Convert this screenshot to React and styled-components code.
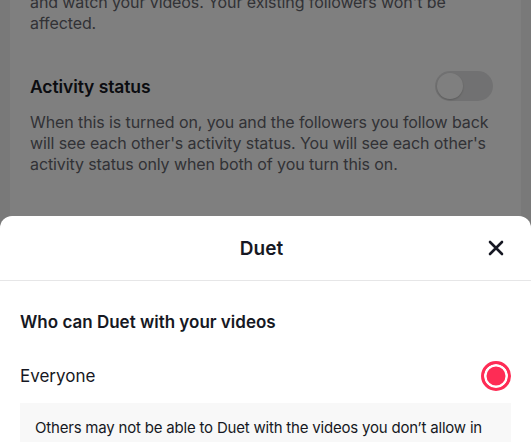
import React, { useState } from "react";
import styled, { createGlobalStyle } from "styled-components";

const GlobalStyle = createGlobalStyle`
  html, body {
    margin: 0;
    padding: 0;
    background: #fff;
    font-family: "Inter", "Liberation Sans", sans-serif;
  }
`;

const App = () => {
  const [choice, setChoice] = useState("everyone");

  return (
    <Screen>
      <GlobalStyle />
      <Page>
        <Desc $clip>
          and watch your videos. Your existing followers won't be affected.
        </Desc>
        <Setting>
          <SettingHead>
            <SettingTitle>Activity status</SettingTitle>
            <Toggle>
              <Knob />
            </Toggle>
          </SettingHead>
          <Desc>
            When this is turned on, you and the followers you follow back will
            see each other's activity status. You will see each other's activity
            status only when both of you turn this on.
          </Desc>
        </Setting>
      </Page>
      <Overlay />
      <Sheet>
        <SheetHeader>
          <SheetTitle>Duet</SheetTitle>
          <CloseButton aria-label="Close">
            <svg width="16" height="16" viewBox="0 0 16 16">
              <path
                d="M2 2 L14 14 M14 2 L2 14"
                stroke="#161823"
                strokeWidth="2.6"
                strokeLinecap="round"
              />
            </svg>
          </CloseButton>
        </SheetHeader>
        <SheetBody>
          <Question>Who can Duet with your videos</Question>
          <Option onClick={() => setChoice("everyone")}>
            <OptionLabel>Everyone</OptionLabel>
            <Radio $checked={choice === "everyone"} />
          </Option>
          <Notice>
            Others may not be able to Duet with the videos you don’t allow in
            their privacy settings.
          </Notice>
        </SheetBody>
      </Sheet>
    </Screen>
  );
};

export default App;

const Screen = styled.div`
  position: relative;
  width: 531px;
  height: 442px;
  overflow: hidden;
  background: #fff;
`;

const Page = styled.div`
  margin: 0 10px;
  height: 100%;
  background: #fff;
  box-shadow: -10px 0 0 #f2f2f2, 10px 0 0 #f2f2f2;
  padding: 0 20px;
  display: flex;
  flex-direction: column;
  gap: 37px;
`;

const Setting = styled.div`
  display: flex;
  flex-direction: column;
  gap: 11px;
`;

const SettingHead = styled.div`
  display: flex;
  align-items: center;
  justify-content: space-between;
  padding-right: 8px;
`;

const SettingTitle = styled.div`
  font-size: 17.5px;
  font-weight: 600;
  color: #161823;
  letter-spacing: -0.1px;
`;

const Toggle = styled.div`
  width: 58px;
  height: 30px;
  border-radius: 15px;
  background: #e3e3e4;
  padding: 2px;
  box-sizing: border-box;
  display: flex;
  align-items: center;
`;

const Knob = styled.div`
  width: 26px;
  height: 26px;
  border-radius: 50%;
  background: #fff;
  box-shadow: 0 1px 2px rgba(0, 0, 0, 0.2);
`;

const Desc = styled.p`
  margin: ${(p) => (p.$clip ? "-8px 0 0" : "0")};
  font-size: 16px;
  line-height: 21px;
  color: #64656c;
  letter-spacing: -0.1px;
`;

const Overlay = styled.div`
  position: absolute;
  inset: 0;
  background: rgba(0, 0, 0, 0.5);
`;

const Sheet = styled.div`
  position: absolute;
  left: 0;
  right: 0;
  top: 216px;
  bottom: 0;
  background: #fff;
  border-radius: 12px 12px 0 0;
`;

const SheetHeader = styled.div`
  position: relative;
  height: 64px;
  padding-right: 8px;
  display: flex;
  align-items: center;
  justify-content: center;
  border-bottom: 1px solid #e6e6e7;
`;

const SheetTitle = styled.div`
  font-size: 19px;
  font-weight: 600;
  color: #161823;
`;

const CloseButton = styled.button`
  position: absolute;
  right: 27px;
  top: 24px;
  padding: 0;
  border: none;
  background: none;
  display: flex;
`;

const SheetBody = styled.div`
  padding: 29px 20px 0;
  display: flex;
  flex-direction: column;
`;

const Question = styled.div`
  font-size: 17px;
  font-weight: 600;
  color: #161823;
  line-height: 24px;
`;

const Option = styled.div`
  display: flex;
  align-items: center;
  justify-content: space-between;
  margin-top: 27px;
  height: 30px;
  cursor: pointer;
`;

const OptionLabel = styled.div`
  font-size: 17px;
  color: #161823;
`;

const Radio = styled.div`
  width: 30px;
  height: 30px;
  border-radius: 50%;
  box-sizing: border-box;
  border: 3px solid ${(p) => (p.$checked ? "#fe2c55" : "#d0d1d3")};
  background: ${(p) => (p.$checked ? "#fe2c55" : "#fff")};
  box-shadow: inset 0 0 0 2.5px #fff;
`;

const Notice = styled.div`
  margin-top: 12px;
  background: #f8f8f8;
  padding: 14px 15px;
  font-size: 15px;
  letter-spacing: -0.2px;
  line-height: 22px;
  color: #161823;
`;
